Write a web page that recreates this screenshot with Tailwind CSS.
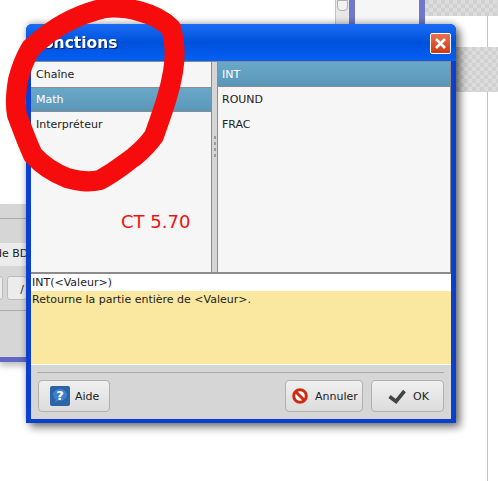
<!DOCTYPE html>
<html>

<head>
    <meta charset="UTF-8">
    <script src="https://cdn.jsdelivr.net/npm/@tailwindcss/browser@4"></script>
    <title>Fonctions</title>
</head>

<body class="relative w-[498px] h-[481px] overflow-hidden bg-white font-['DejaVu_Sans',sans-serif] text-[11px] text-[#222]">
    <!-- Background windows -->
    <div class="absolute left-[487px] top-[16px] w-px h-[465px] bg-[#c4c4c4]"></div>
    <div class="absolute left-[425px] top-0 w-[73px] h-[16px] bg-[#d6d6d6] bg-[repeating-conic-gradient(#dcdcdc_0_25%,#d0d0d0_0_50%)] bg-[length:8px_8px]"></div>
    <div class="absolute left-[456px] top-[47px] w-[42px] h-[45px] bg-[#d6d6d6] bg-[repeating-conic-gradient(#dcdcdc_0_25%,#d0d0d0_0_50%)] bg-[length:8px_8px]"></div>
    <div class="absolute left-[335px] top-0 w-[14px] h-[24px] bg-[#e8e8e8] border-l border-[#c4c4c4]">
        <div class="ml-[1px] w-[11px] h-[11px] bg-[#f2f2f2] border border-[#b0b0b0] rounded-b-[4px]"></div>
    </div>
    <div class="absolute left-[349px] top-0 w-[6px] h-[24px] bg-[#6f78cc]"></div>
    <div class="absolute left-[355px] top-0 w-[64px] h-[24px] bg-[#f6f6f6]"></div>
    <div class="absolute left-[419px] top-0 w-[6px] h-[24px] bg-[#6f78cc]"></div>

    <div class="absolute left-0 top-[204px] w-[27px] h-[158px] bg-[#d6d6d6] border-b-[5px] border-[#5f68c4] shadow-[0_4px_6px_rgba(0,0,0,0.25)]">
        <div class="h-[15px] border-b border-[#aaa]"></div>
        <div class="mt-[24px] h-[23px] bg-[#ececec] flex items-center overflow-hidden">
            <span class="whitespace-nowrap -ml-[5px]">de BD</span>
        </div>
        <div class="mt-[10px] flex gap-[4px] h-[24px] -ml-[6px]">
            <div class="w-[12px] bg-[#ececec] border border-[#bbb] rounded-[3px]"></div>
            <div class="w-[22px] bg-[#ececec] border border-[#bbb] rounded-[3px] pl-[12px] pt-[5px]">/</div>
        </div>
        <div class="mt-[10px] border-t border-[#aaa]"></div>
    </div>

    <!-- Dialog -->
    <div class="absolute left-[26px] top-[24px] w-[430px] h-[399px] flex flex-col rounded-t-[6px] bg-[#0a3fd0] px-[5px] pb-[4px] shadow-[4px_4px_8px_rgba(0,0,0,0.55),0_-2px_6px_rgba(0,0,0,0.2)]">
        <div class="h-[37px] -mx-[5px] pl-[7px] pr-[5px] pt-[1px] flex items-center justify-between rounded-t-[6px] bg-gradient-to-b from-[#1a6cf4] via-[#0050dc] to-[#0460f4]">
            <span class="pt-[2px] text-white text-[15.5px] font-bold drop-shadow-[1px_1px_0_rgba(0,0,0,0.6)]">Fonctions</span>
            <div class="w-[21px] h-[21px] flex items-center justify-center rounded-[2px] border border-white bg-gradient-to-b from-[#e8704c] to-[#cc3a10]">
                <svg width="13" height="13" viewBox="0 0 13 13">
                    <path d="M2 2L11 11M11 2L2 11" stroke="#fff" stroke-width="2.6" />
                </svg>
            </div>
        </div>

        <div class="flex flex-col flex-1 bg-[#d6d6d6]">
            <div class="flex h-[213px] border-t border-b-[2px] border-[#8c8c8c]">
                <div class="relative w-[181px] border-r border-[#8c8c8c] bg-[#f6f6f6]">
                    <div class="h-[25px] pl-[5px] pt-[2px] flex items-center">Chaîne</div>
                    <div class="h-[25px] pl-[5px] pt-[1px] flex items-center border-y border-[#8c8c8c] bg-gradient-to-b from-[#6aa8ca] to-[#5a96b8] text-white">Math</div>
                    <div class="h-[25px] pl-[5px] pt-[2px] flex items-center">Interpréteur</div>
                    <div class="absolute left-[90px] top-[149px] text-[18px] leading-[22px] text-[#f01010]">CT 5.70</div>
                </div>
                <div class="w-[5px] flex flex-col items-center gap-[3px] pt-[74px]">
                    <div class="w-[2px] h-[3px] bg-[#999]"></div>
                    <div class="w-[2px] h-[3px] bg-[#999]"></div>
                    <div class="w-[2px] h-[3px] bg-[#999]"></div>
                    <div class="w-[2px] h-[3px] bg-[#999]"></div>
                </div>
                <div class="flex-1 border-x border-[#8c8c8c] bg-[#f6f6f6]">
                    <div class="h-[25px] pl-[4px] pt-[2px] flex items-center border-b border-[#8c8c8c] bg-gradient-to-b from-[#6aa8ca] to-[#5a96b8] text-white">INT</div>
                    <div class="h-[25px] pl-[4px] pt-[2px] flex items-center">ROUND</div>
                    <div class="h-[25px] pl-[4px] pt-[2px] flex items-center">FRAC</div>
                </div>
            </div>
            <div class="h-[17px] bg-white pl-px flex items-center leading-none">INT(&lt;Valeur&gt;)</div>
            <div class="h-[74px] bg-[#fbe8a0] pl-px pt-[1px] leading-[16px] border-b border-white">Retourne la partie entière de &lt;Valeur&gt;.</div>
            <div class="flex-1 pl-[6px] pr-[7px]">
                <div class="mt-[7px] border-t border-[#aaa]"></div>
                <div class="mt-[7px] pl-[1px] flex justify-between">
                    <div class="w-[72px] h-[32px] flex items-center gap-[5px] pl-[11px] rounded-[4px] border border-[#b0b0b0] bg-gradient-to-b from-[#f0f0f0] to-[#dcdcdc]">
                        <svg width="20" height="20" viewBox="0 0 20 20">
                            <rect width="20" height="20" rx="2" fill="#2c64a8" />
                            <path d="M3 9a7 6 0 1 1 5 5.6L5 17l.8-3.6A6 6 0 0 1 3 9z" fill="#3f80c6" />
                            <text x="10" y="14" text-anchor="middle" font-size="13" font-weight="700" fill="#fff" font-family="DejaVu Sans">?</text>
                        </svg>
                        <span class="pt-[2px]">Aide</span>
                    </div>
                    <div class="flex gap-[8px]">
                        <div class="w-[78px] h-[32px] flex items-center gap-[7px] pl-[6px] rounded-[4px] border border-[#b0b0b0] bg-gradient-to-b from-[#f0f0f0] to-[#dcdcdc]">
                            <svg width="16" height="16" viewBox="0 0 16 16">
                                <circle cx="8" cy="8" r="6.3" fill="#fff" stroke="#d22a10" stroke-width="3" />
                                <path d="M3.5 3.5L12.5 12.5" stroke="#d22a10" stroke-width="3" />
                            </svg>
                            <span class="pt-[2px]">Annuler</span>
                        </div>
                        <div class="w-[73px] h-[32px] flex items-center gap-[7px] pl-[16px] rounded-[4px] border border-[#b0b0b0] bg-gradient-to-b from-[#f0f0f0] to-[#dcdcdc]">
                            <svg width="18" height="15" viewBox="0 0 18 15">
                                <path d="M1.5 7.5L8 12.5L16.5 2" fill="none" stroke="#444" stroke-width="3.6" />
                            </svg>
                            <span class="pt-[2px]">OK</span>
                        </div>
                    </div>
                </div>
            </div>
        </div>
    </div>

    <!-- Red marker circle drawn over the screenshot -->
    <svg class="absolute left-0 top-0" width="498" height="481" viewBox="0 0 498 481">
        <path d="M105 8C125 6 155 12 171 28C176 45 175 60 173 72C170 90 165 105 154 136C147 146 140 152 134 157C125 163 118 170 100 180C88 183 78 181 67 178C52 172 42 165 33 155C26 140 22 128 17 115C15 105 16 92 18 80C21 68 25 58 31 48C42 38 52 30 65 23C78 16 92 11 105 8Z" fill="none" stroke="#f60c0c" stroke-width="20" stroke-linejoin="round" />
    </svg>
</body>

</html>
